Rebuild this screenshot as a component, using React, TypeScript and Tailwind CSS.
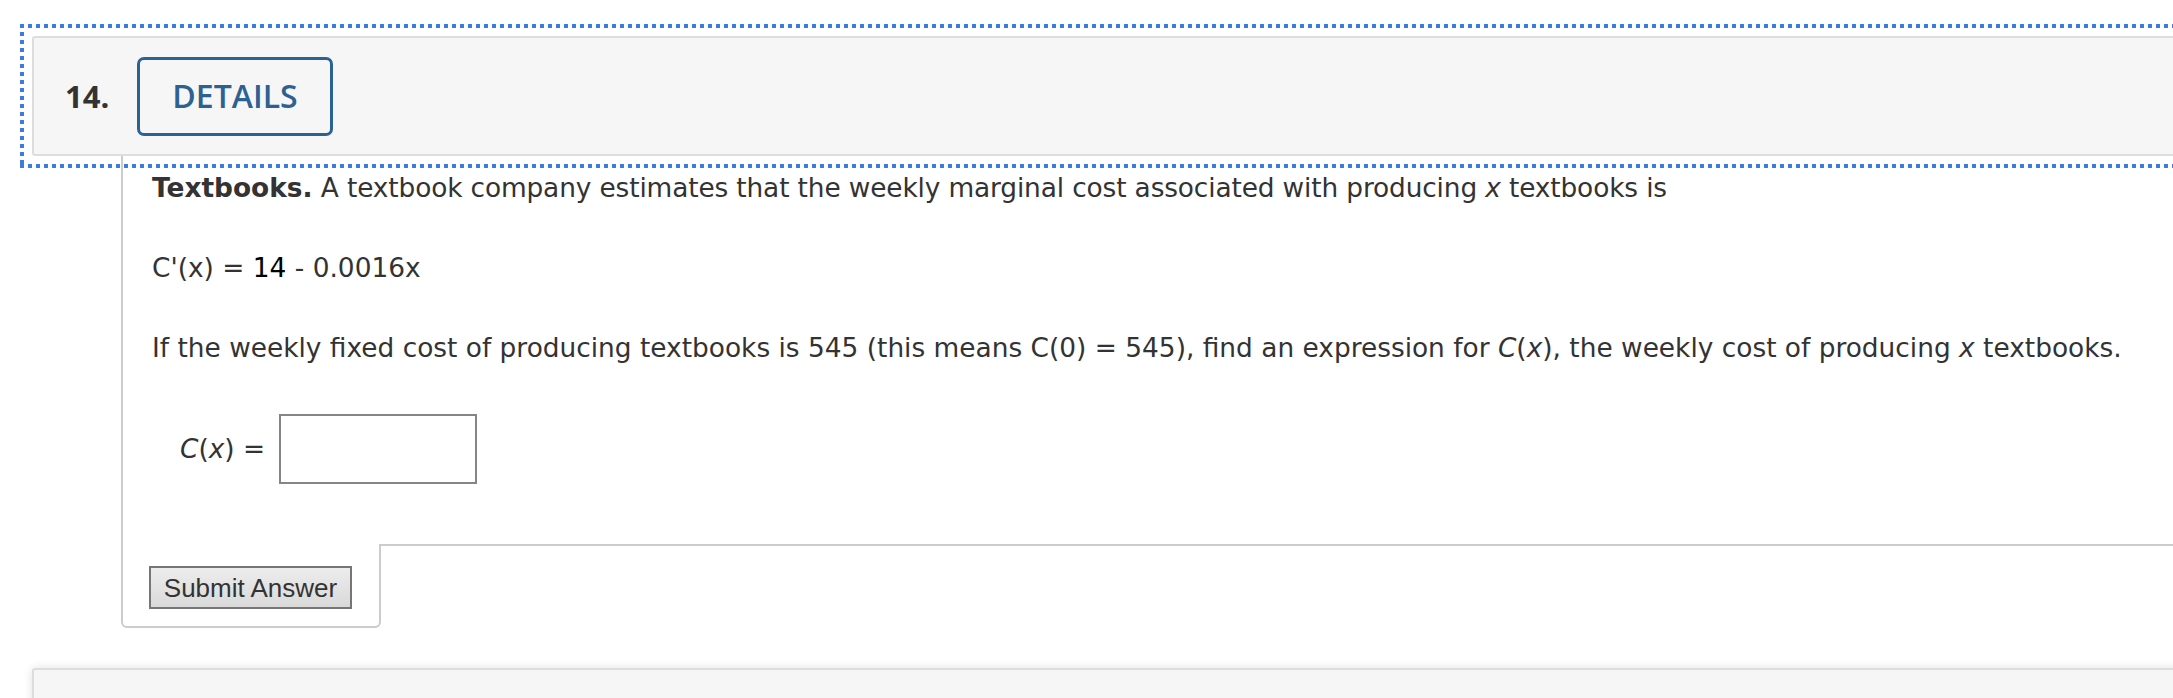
import React from "react";

function FocusRing() {
  return (
    <div className="absolute -inset-[12px] pointer-events-none">
      <div className="absolute left-0 right-0 top-0 h-[4px] bg-[repeating-linear-gradient(90deg,#3b7ddd_0px,#3b7ddd_4px,transparent_4px,transparent_8px)]" />
      <div className="absolute left-0 right-0 bottom-0 h-[4px] bg-[repeating-linear-gradient(90deg,#3b7ddd_0px,#3b7ddd_4px,transparent_4px,transparent_8px)]" />
      <div className="absolute top-0 bottom-0 left-0 w-[4px] bg-[repeating-linear-gradient(180deg,#3b7ddd_0px,#3b7ddd_4px,transparent_4px,transparent_8px)]" />
      <div className="absolute top-0 bottom-0 right-0 w-[4px] bg-[repeating-linear-gradient(180deg,#3b7ddd_0px,#3b7ddd_4px,transparent_4px,transparent_8px)]" />
    </div>
  );
}

export default function App() {
  return (
    <div className="w-[2173px] h-[698px] overflow-hidden bg-white relative">
      <div className="w-[2400px] pl-[32px] pt-[36px]">
        {/* header */}
        <div className="relative">
          <div className="h-[120px] border-2 border-[#dddddd] bg-[#f6f6f6] rounded-[3px] flex items-center pl-[31px]">
            <span className="w-[72px] font-['Open_Sans',sans-serif] font-bold text-[31px] text-[#333333] leading-none">
              14.
            </span>
            <button className="w-[196px] h-[79px] border-[3px] border-[#2c6195] rounded-[7px] bg-transparent font-['Open_Sans',sans-serif] font-semibold text-[32px] text-[#2d6192] leading-none">
              DETAILS
            </button>
          </div>
          <FocusRing />
        </div>

        {/* question content */}
        <div className="ml-[89px] border-l-2 border-[#cccccc] pl-[29px] pt-[12px] h-[388px] font-['DejaVu_Sans',sans-serif] text-[26.4px] leading-[40px] text-[#333333]">
          <div>
            <span className="font-bold">Textbooks.</span>{" "}
            <span className="tracking-[-0.14px]">
              A textbook company estimates that the weekly marginal cost associated with producing <i>x</i> textbooks is
            </span>
          </div>
          <div className="h-[40px]" />
          <div>
            C'(x) = <span className="text-black">14</span> - 0.0016x
          </div>
          <div className="h-[40px]" />
          <div>
            If the weekly fixed cost of producing textbooks is 545 (this means C(0) = 545), find an expression for <i>C</i>(<i>x</i>), the weekly cost of producing <i>x</i> textbooks.
          </div>
          <div className="mt-[46px] pl-[28px] flex items-center h-[70px]">
            <span>
              <i>C</i>(<i>x</i>) =
            </span>
            <div className="ml-[14px] w-[198px] h-[70px] border-2 border-[#858585] bg-white" />
          </div>
        </div>

        {/* submit row */}
        <div className="ml-[89px] flex">
          <div className="w-[260px] h-[84px] border-l-2 border-r-2 border-b-2 border-[#cccccc] rounded-b-[6px] pl-[26px] pt-[22px] bg-white">
            <button className="w-[203px] h-[43px] border-2 border-[#767676] bg-[linear-gradient(#ededed,#d9d9d9)] font-['Liberation_Sans',sans-serif] text-[26px] text-[#333333] leading-none">
              Submit Answer
            </button>
          </div>
          <div className="flex-1 -ml-[2px] border-t-2 border-[#cccccc]" />
        </div>

        {/* next question */}
        <div className="mt-[40px] h-[100px] border-2 border-[#dddddd] bg-[#f6f6f6] rounded-[3px] shadow-[0_0_10px_rgba(0,0,0,0.12)]" />
      </div>
    </div>
  );
}
